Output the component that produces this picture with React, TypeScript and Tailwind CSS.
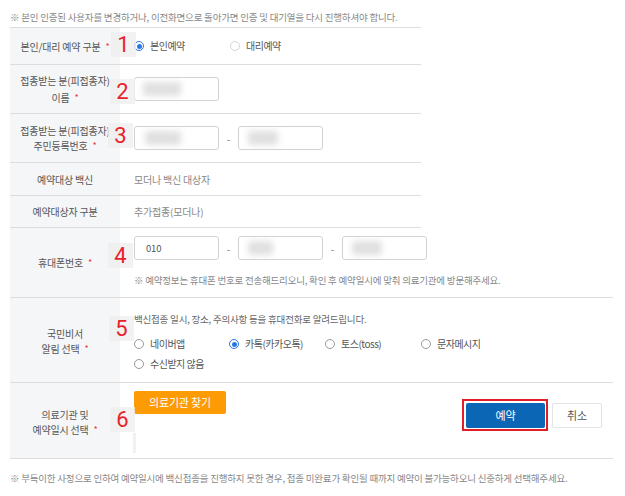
import React from "react";

function Star() {
  return <span className="ml-[5px] text-[9px] text-[#e8383d] align-top">*</span>;
}

function Radio({ checked, light }: { checked?: boolean; light?: boolean }) {
  if (checked) {
    return (
      <span className="flex h-[10px] w-[10px] items-center justify-center rounded-full border-[1.5px] border-[#2a78e4] bg-white">
        <span className="h-[5px] w-[5px] rounded-full bg-[#2a78e4]" />
      </span>
    );
  }
  return (
    <span
      className={
        light
          ? "h-[10px] w-[10px] rounded-full border border-[#d6d6d6] bg-white"
          : "h-[10px] w-[10px] rounded-full border border-[#9a9a9a] bg-white"
      }
    />
  );
}

function Opt({ label, checked, light, w }: { label: string; checked?: boolean; light?: boolean; w: string }) {
  return (
    <div className={"flex items-center gap-[6px] " + w}>
      <Radio checked={checked} light={light} />
      <span className="text-[10px] leading-[14px] tracking-[-0.5px] text-[#555]">{label}</span>
    </div>
  );
}

function Input({ children }: { children?: React.ReactNode }) {
  return (
    <div className="flex h-[24px] w-[85px] items-center overflow-hidden rounded-[3px] border border-[#d2d2d2] bg-white">
      {children}
    </div>
  );
}

function Blur({ w, ml }: { w: string; ml: string }) {
  return <div className={"h-[14px] rounded-[2px] bg-[#e0e0e0] blur-[3px] " + w + " " + ml} />;
}

function Dash() {
  return <span className="w-[19px] text-center text-[10px] text-[#777]">-</span>;
}

function Label({ children }: { children: React.ReactNode }) {
  return (
    <div className="flex w-[110px] shrink-0 items-center justify-center bg-[#f5f6f8] text-center text-[10px] leading-[15px] text-[#555]">
      {children}
    </div>
  );
}

function Num({ n, cls }: { n: string; cls: string }) {
  return (
    <div
      className={
        "absolute flex h-[25px] w-[25px] items-center justify-center bg-[#efefef]/80 font-['Roboto',sans-serif] text-[22px] leading-none tracking-normal text-[#e8222b] " +
        cls
      }
    >
      {n}
    </div>
  );
}

export default function App() {
  return (
    <div className="relative h-[496px] w-[625px] overflow-hidden bg-white font-['Noto_Sans_CJK_KR','Noto_Sans',sans-serif] tracking-[-0.2px] text-[#555]">
      <p className="h-[27px] pl-[10px] pt-[10px] text-[9.5px] leading-[14px] text-[#888]">
        ※ 본인 인증된 사용자를 변경하거나, 이전화면으로 돌아가면 인증 및 대기열을 다시 진행하셔야 합니다.
      </p>

      <div className="ml-[10px]">
        <div className="w-[411px] border-t border-[#dddddd]">
          <div className="flex h-[37px] border-b border-[#dddddd]">
            <Label>
              <span>
                본인/대리 예약 구분
                <Star />
              </span>
            </Label>
            <div className="flex flex-1 items-center pl-[14px]">
              <Opt label="본인예약" checked w="w-[96px]" />
              <Opt label="대리예약" light w="w-[96px]" />
            </div>
          </div>

          <div className="flex h-[49px] border-b border-[#dddddd]">
            <Label>
              <span className="leading-[17px]">
                접종받는 분(피접종자)
                <br />
                이름
                <Star />
              </span>
            </Label>
            <div className="flex flex-1 items-center pl-[14px]">
              <Input>
                <Blur w="w-[38px]" ml="ml-[8px]" />
              </Input>
            </div>
          </div>

          <div className="flex h-[49px] border-b border-[#dddddd]">
            <Label>
              <span>
                접종받는 분(피접종자)
                <br />
                주민등록번호
                <Star />
              </span>
            </Label>
            <div className="flex flex-1 items-center pl-[14px]">
              <Input>
                <Blur w="w-[36px]" ml="ml-[10px]" />
              </Input>
              <Dash />
              <Input>
                <Blur w="w-[30px]" ml="ml-[9px]" />
              </Input>
            </div>
          </div>

          <div className="flex h-[33px] border-b border-[#dddddd]">
            <Label>예약대상 백신</Label>
            <div className="flex flex-1 items-center pl-[14px] text-[10px] text-[#888]">모더나 백신 대상자</div>
          </div>

          <div className="flex h-[32px] border-b border-[#dddddd]">
            <Label>예약대상자 구분</Label>
            <div className="flex flex-1 items-center pl-[14px] text-[10px] text-[#888]">추가접종(모더나)</div>
          </div>
        </div>

        <div className="w-[603px]">
          <div className="flex h-[70px] border-b border-[#dddddd]">
            <Label>
              <span>
                휴대폰번호
                <Star />
              </span>
            </Label>
            <div className="flex flex-1 flex-col pl-[14px] pt-[8px]">
              <div className="flex items-center">
                <Input>
                  <span className="ml-[11px] text-[9.5px] text-[#555]">010</span>
                </Input>
                <Dash />
                <Input>
                  <Blur w="w-[25px]" ml="ml-[9px]" />
                </Input>
                <Dash />
                <Input>
                  <Blur w="w-[30px]" ml="ml-[9px]" />
                </Input>
              </div>
              <p className="mt-[13px] text-[9.5px] leading-[14px] text-[#888]">
                ※ 예약정보는 휴대폰 번호로 전송해드리오니, 확인 후 예약일시에 맞춰 의료기관에 방문해주세요.
              </p>
            </div>
          </div>

          <div className="flex h-[85px] border-b border-[#dddddd]">
            <Label>
              <span className="pt-[2px]">
                국민비서
                <br />
                알림 선택
                <Star />
              </span>
            </Label>
            <div className="flex flex-1 flex-col pl-[14px] pt-[14px]">
              <p className="text-[9.5px] leading-[14px] text-[#666]">
                백신접종 일시, 장소, 주의사항 등을 휴대전화로 알려드립니다.
              </p>
              <div className="mt-[11px] flex items-center">
                <Opt label="네이버앱" w="w-[95px]" />
                <Opt label="카톡(카카오톡)" checked w="w-[96px]" />
                <Opt label="토스(toss)" w="w-[96px]" />
                <Opt label="문자메시지" w="w-[96px]" />
              </div>
              <div className="mt-[6px] flex items-center">
                <Opt label="수신받지 않음" w="w-[120px]" />
              </div>
            </div>
          </div>

          <div className="flex h-[76px] border-b border-[#dddddd]">
            <Label>
              <span className="pt-[2px]">
                의료기관 및
                <br />
                예약일시 선택
                <Star />
              </span>
            </Label>
            <div className="flex flex-1 items-start justify-between pl-[14px] pr-[11px] pt-[8px]">
              <button className="flex h-[23px] w-[92px] items-center justify-center rounded-[2px] bg-[#fd9b04] text-[11px] text-white">
                의료기관 찾기
              </button>
              <div className="mt-[12px] flex items-center gap-[7px]">
                <div className="relative">
                  <button className="flex h-[25px] w-[79px] items-center justify-center rounded-[2px] bg-[#0b67b6] text-[11px] text-white">
                    예약
                  </button>
                  <div className="absolute -bottom-[3px] -left-[4px] -right-[3px] -top-[4px] border-2 border-[#e21f26]" />
                </div>
                <button className="flex h-[25px] w-[50px] items-center justify-center rounded-[2px] border border-[#e3e3e3] bg-white text-[11px] text-[#555]">
                  취소
                </button>
              </div>
            </div>
          </div>
        </div>
      </div>

      <p className="pl-[10px] pt-[12px] text-[9.5px] leading-[14px] text-[#888]">
        ※ 부득이한 사정으로 인하여 예약일시에 백신접종을 진행하지 못한 경우, 접종 미완료가 확인될 때까지 예약이 불가능하오니 신중하게 선택해주세요.
      </p>

      <Num n="1" cls="left-[111px] top-[32px]" />
      <Num n="2" cls="left-[110px] top-[79px]" />
      <Num n="3" cls="left-[108px] top-[123px]" />
      <Num n="4" cls="left-[108px] top-[243px]" />
      <Num n="5" cls="left-[109px] top-[316px]" />
      <Num n="6" cls="left-[110px] top-[407px]" />
      <div className="absolute left-[133px] top-[433px] h-[20px] w-[3px] bg-[#eef2f6]" />
    </div>
  );
}
